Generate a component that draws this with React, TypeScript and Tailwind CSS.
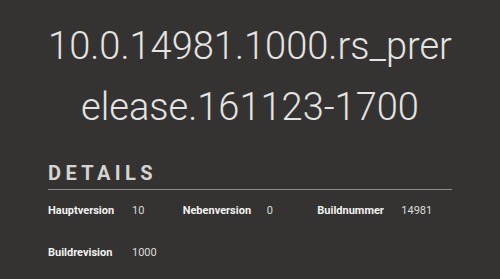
import React from 'react';

const details = [
  { label: 'Hauptversion', value: '10' },
  { label: 'Nebenversion', value: '0' },
  { label: 'Buildnummer', value: '14981' },
  { label: 'Buildrevision', value: '1000' },
];

export default function App() {
  return (
    <div className="h-[279px] w-[500px] overflow-hidden bg-[#343331] font-['Roboto',sans-serif] text-[#e6e6e6]">
      <div className="px-[48px] pt-[16px]">
        <h1 className="break-all text-center text-[38px] font-light leading-[61px] text-[#e4e4e2]">
          10.0.14981.1000.rs_prerelease.161123-1700
        </h1>

        <h2 className="mt-[23px] text-[20px] font-bold leading-[24px] tracking-[0.22em] text-[#d4d4d2]">DETAILS</h2>
        <div className="mt-[4px] h-px bg-[#8c8b89]" />

        <div className="mt-[14px] grid grid-cols-3 gap-y-[29px]">
          {details.map((d) => (
            <div key={d.label} className="flex text-[11px] leading-[13px]">
              <span className="w-[84px] font-bold text-[#f2f2f2]">{d.label}</span>
              <span className="text-[#dcdcdc]">{d.value}</span>
            </div>
          ))}
        </div>
      </div>
    </div>
  );
}
